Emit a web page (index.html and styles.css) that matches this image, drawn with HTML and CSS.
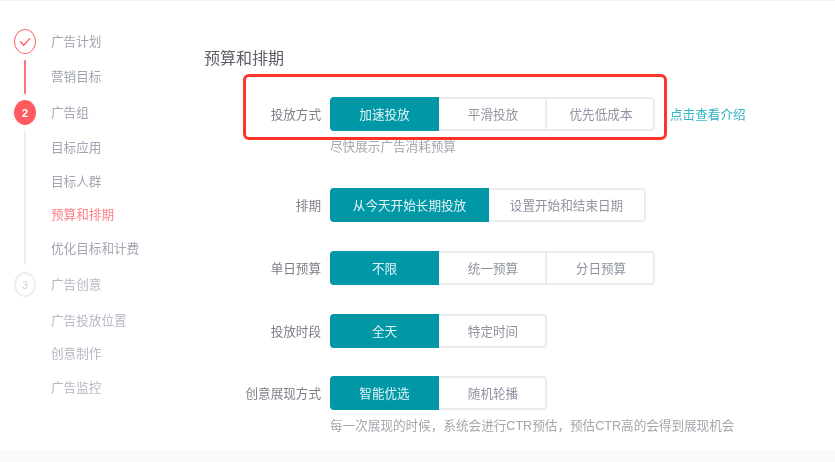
FILE: index.html
```html
<!DOCTYPE html>
<html lang="zh-CN">
<head>
<meta charset="utf-8">
<title>预算和排期</title>
<link rel="stylesheet" href="styles.css">
</head>
<body>
<div class="page">
  <div class="content">
    <nav class="sidebar">
      <section class="step step-one">
        <div class="rail">
          <span class="dot dot-done"><svg viewBox="0 0 22 25" width="22" height="25"><path d="M6.5 12.8l3.2 3.4 6-6.6" fill="none" stroke="#ff5a60" stroke-width="1.3" stroke-linecap="round" stroke-linejoin="round"/></svg></span>
          <span class="line line-red"></span>
        </div>
        <ul class="links">
          <li>广告计划</li>
          <li>营销目标</li>
        </ul>
      </section>
      <section class="step step-two">
        <div class="rail">
          <span class="dot dot-active">2</span>
          <span class="line line-gray"></span>
        </div>
        <ul class="links">
          <li>广告组</li>
          <li>目标应用</li>
          <li>目标人群</li>
          <li class="current">预算和排期</li>
          <li>优化目标和计费</li>
        </ul>
      </section>
      <section class="step step-three">
        <div class="rail">
          <span class="dot dot-todo">3</span>
        </div>
        <ul class="links links-muted">
          <li>广告创意</li>
          <li>广告投放位置</li>
          <li class="tight">创意制作</li>
          <li>广告监控</li>
        </ul>
      </section>
    </nav>
    <main class="main">
      <h1 class="title">预算和排期</h1>
      <div class="row row-first">
        <div class="highlight"></div>
        <span class="label">投放方式</span>
        <div class="group">
          <span class="btn on">加速投放</span>
          <span class="btn">平滑投放</span>
          <span class="btn">优先低成本</span>
        </div>
        <a class="link">点击查看介绍</a>
      </div>
      <p class="hint">尽快展示广告消耗预算</p>
      <div class="row row-schedule">
        <span class="label">排期</span>
        <div class="group">
          <span class="btn wide on">从今天开始长期投放</span>
          <span class="btn wide">设置开始和结束日期</span>
        </div>
      </div>
      <div class="row row-next">
        <span class="label">单日预算</span>
        <div class="group">
          <span class="btn on">不限</span>
          <span class="btn">统一预算</span>
          <span class="btn">分日预算</span>
        </div>
      </div>
      <div class="row row-next">
        <span class="label">投放时段</span>
        <div class="group">
          <span class="btn on">全天</span>
          <span class="btn">特定时间</span>
        </div>
      </div>
      <div class="row row-last">
        <span class="label">创意展现方式</span>
        <div class="group">
          <span class="btn on">智能优选</span>
          <span class="btn">随机轮播</span>
        </div>
      </div>
      <p class="hint">每一次展现的时候，系统会进行CTR预估，预估CTR高的会得到展现机会</p>
    </main>
  </div>
  <div class="footer"></div>
</div>
</body>
</html>
```
FILE: styles.css
```css
* { box-sizing: border-box; }
html, body { margin: 0; padding: 0; background: #fff; }
body { font-family: "Liberation Sans", "Noto Sans CJK SC", sans-serif; font-size: 12.6px; overflow: hidden; }
.page { width: 835px; height: 462px; display: flex; flex-direction: column; border-top: 1px solid #f3f3f3; filter: blur(0.4px); }
.content { flex: 1; display: flex; min-height: 0; }
.footer { height: 12px; background: #f9f9f9; }

.sidebar { width: 204px; flex: none; padding: 28px 0 0 14px; }
.step { display: flex; gap: 15px; }
.step-one { height: 71px; }
.step-two { height: 172px; }
.rail { width: 22px; flex: none; display: flex; flex-direction: column; align-items: center; }
.dot { width: 22px; height: 25px; border-radius: 50%; display: flex; align-items: center; justify-content: center; font-size: 11px; flex: none; }
.dot-done { border: 1.5px solid #ff6a6f; }
.dot-done svg { margin: -1.5px; flex: none; }
.dot-active { background: #ff5a60; color: #fff; font-weight: 700; }
.dot-todo { border: 2px solid #eeeeee; color: #d4d4d6; }
.line { width: 2px; margin-top: 6px; flex: none; border-radius: 1px; }
.line-red { height: 34px; background: #ff7378; }
.line-gray { height: 134px; background: #eeeeee; }
.links { list-style: none; margin: 1px 0 0; padding: 0; display: flex; flex-direction: column; gap: 9px; color: #a0a5b1; }
.step-one .links { gap: 10px; }
.links li { height: 25px; line-height: 25px; white-space: nowrap; }
.step-two .links li:first-child { margin-bottom: 1px; }
.step-three .links li:first-child { margin-bottom: 2px; }
.links .current { color: #ff7e83; margin-top: -1px; }
.links .tight { margin-top: -1px; }
.links-muted { color: #b4b8c2; }

.main { flex: 1; min-width: 0; }
.title { margin: 0; padding-top: 45px; height: 75px; font-size: 16px; line-height: 26px; font-weight: 400; color: #5c5f66; }
.row { position: relative; display: flex; align-items: center; height: 34px; }
.row-first { margin-top: 21px; }
.row-schedule { margin-top: 22px; }
.row-next { margin-top: 29px; }
.row-last { margin-top: 28px; }
.label { width: 117px; margin-right: 9px; padding-bottom: 2px; text-align: right; color: #7c7f86; flex: none; }
.group { display: flex; height: 34px; }
.btn { width: 108px; height: 34px; padding-bottom: 2px; padding-left: 2px; display: flex; align-items: center; justify-content: center; border: 2px solid #ececf0; border-left-width: 0; color: #8f93a0; white-space: nowrap; }
.btn:first-child { border-left-width: 2px; border-radius: 4px 0 0 4px; }
.btn:last-child { border-radius: 0 4px 4px 0; }
.btn.on { width: 109px; padding-left: 0; background: #0097a7; border-color: #0097a7; color: #e4f4f6; }
.btn.wide { width: 157px; padding-left: 0; }
.btn.wide.on { width: 159px; }
.link { margin-left: 15px; padding-bottom: 2px; color: #33b3c6; }
.hint { margin: 0 0 0 126px; height: 35px; padding-top: 6px; line-height: 20px; color: #a4a6ac; white-space: nowrap; }
.highlight { position: absolute; left: 38.5px; top: -23.5px; width: 424px; height: 66px; border: 3px solid #ff3327; border-radius: 6px; pointer-events: none; }
```
